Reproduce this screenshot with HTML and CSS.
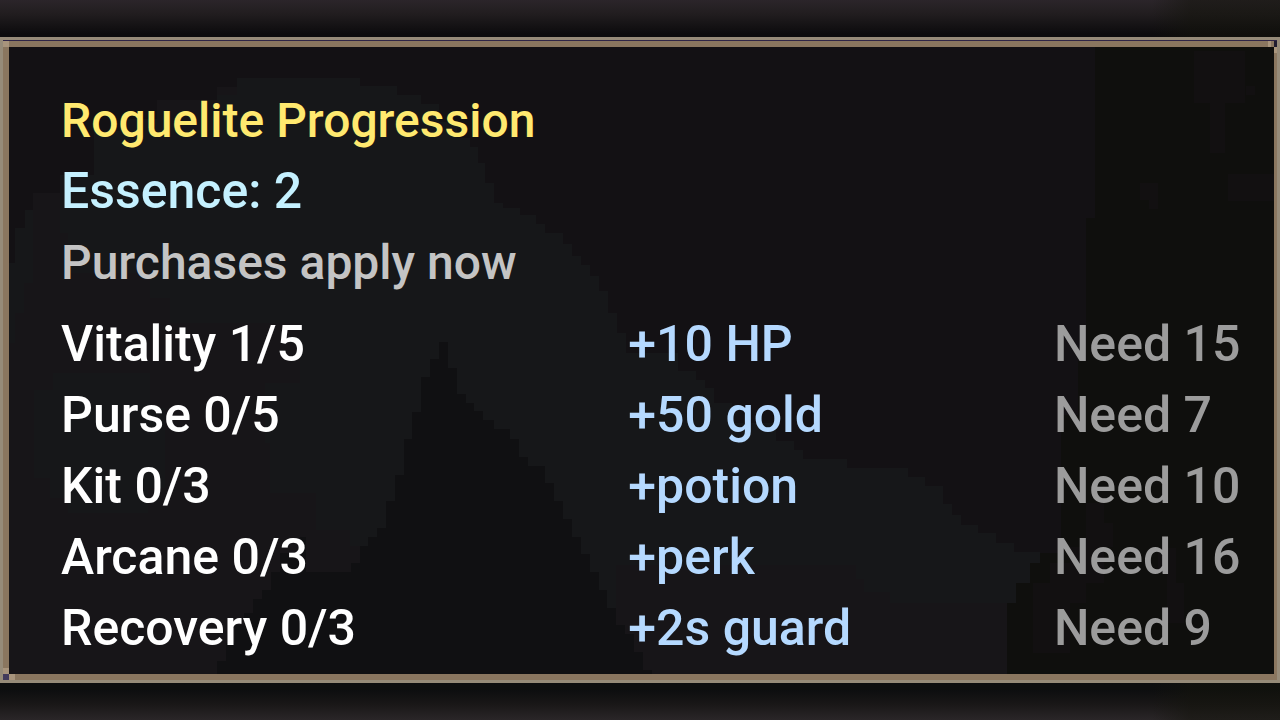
FILE: index.html
```html
<!DOCTYPE html>
<html lang="en">
<head>
<meta charset="UTF-8">
<meta name="viewport" content="width=device-width, initial-scale=1.0">
<title>Roguelite Progression</title>
<link rel="stylesheet" href="styles.css">
</head>
<body>
    <main class="panel">
        <svg class="scene" viewBox="3 -3 1274 640" preserveAspectRatio="none" aria-hidden="true">
            <!-- far hill -->
            <path class="hill" d="M0 640V220H15V185H25V167H33V159H50V150H60V132H94V88H120V76H157V57H217V44H237V35H280V35H360V43H397V52H421V61H439V79H457V95H470V104H478V120H485V140H494V160H503V165H520V172H536V181H545V190H563V201H572V213H581V222H590V233H599V248H608V270H617V290H626V310H678V328H696V337H705V345H714V360H732V380H776V398H794V407H803V416H847V425H908V434H925V443H943V461H952V472H961V482H978V490H996V500H1014V509H1040V520H1030V540H1016V560H1007V640Z"/>
            <!-- warm patches on the slope -->
            <path class="ground" d="M157 97V57H217V44H237V52H217V97ZM33 240V150H60V190H68V230H150V255H170V280H300V340H265V400H270V450H316V487H350V503H368V520H351V640H0V300H15V270H24V240Z"/>
            <path class="hill" d="M34 347H53V330H150V365H165V445H148V470H68V455H50V435H34Z"/>
            <path class="ground" d="M616 640V522H856V536H864V549H890V560H1007V640Z"/>
            <!-- near peak -->
            <path class="peak" d="M217 640V618H226V600H235V582H244V570H253V556H262V547H271V529H280V510H300V494H306V529H351V520H360V503H368V494H377V485H386V458H395V432H404V396H412V369H421V334H430V316H439V299H448V325H457V351H466V360H474V368H483V377H494V386H510V396H519V414H528V423H545V440H554V458H563V476H572V494H581V511H590V529H599V547H607V565H616V582H625V591H634V609H643V627H652V640Z"/>
            <!-- tree trunk -->
            <path class="tree" d="M1095 -3V175H1086V318H1078V372H1061V510H1040V520H1030V540H1016V560H1007V640H1280V-3Z"/>
            <path class="bark" d="M1194 8H1245V60H1225V110H1210V60H1194ZM1203 25H1211V34H1203ZM1246 43H1255V52H1246ZM1140 140H1158V166H1149V157H1140ZM1228 131H1274V158H1228ZM1086 460H1104V480H1113V504H1104V540H1086V560H1070V610H1033V540H1050V520H1070V504H1086ZM1158 505H1176V540H1184V580H1167V530H1158Z"/>
        </svg>

        <div class="frame">
            <span class="corner top-left"></span>
            <span class="corner top-right"></span>
            <span class="corner bottom-left"></span>
        </div>

        <div class="content">
            <h1 class="title">Roguelite Progression</h1>
            <p class="essence">Essence: 2</p>
            <p class="note">Purchases apply now</p>

            <table class="upgrades">
                <tr>
                    <td class="name">Vitality 1/5</td>
                    <td class="bonus">+10 HP</td>
                    <td class="cost">Need 15</td>
                </tr>
                <tr>
                    <td class="name">Purse 0/5</td>
                    <td class="bonus">+50 gold</td>
                    <td class="cost">Need 7</td>
                </tr>
                <tr>
                    <td class="name">Kit 0/3</td>
                    <td class="bonus">+potion</td>
                    <td class="cost">Need 10</td>
                </tr>
                <tr>
                    <td class="name">Arcane 0/3</td>
                    <td class="bonus">+perk</td>
                    <td class="cost">Need 16</td>
                </tr>
                <tr>
                    <td class="name">Recovery 0/3</td>
                    <td class="bonus">+2s guard</td>
                    <td class="cost">Need 9</td>
                </tr>
            </table>
        </div>
    </main>
</body>
</html>
```

FILE: styles.css
```css
* {
    box-sizing: border-box;
}

body {
    margin: 0;
    padding: 37px 0;
    min-height: 100vh;
    display: flex;
    background:
        linear-gradient(90deg, transparent 90%, rgba(20, 20, 12, 0.5) 93%),
        linear-gradient(#2b252a 0, #211d1f 14px, #0c0b0d 34px, #0d0e0f calc(100% - 30px), #191717 calc(100% - 16px), #2a2628 100%);
    color: #ffffff;
    font-family: Roboto, sans-serif;
    font-size: 50px;
    font-weight: 500;
    line-height: 71px;
}

.panel {
    position: relative;
    flex: 1;
    border: 3px solid #968b79;
    background-color: #131114;
}

.scene {
    position: absolute;
    width: 100%;
    height: 100%;
    shape-rendering: crispEdges;
}

.hill {
    fill: #161719;
}

.ground {
    fill: #171518;
}

.peak {
    fill: #101012;
}

.tree {
    fill: #0f0f0d;
}

.bark {
    fill: #121011;
}

/* inner brown frame with a thin dark line above it */
.frame {
    position: absolute;
    inset: 1px 0 0;
    border: 6px solid #8a765f;
    border-right-width: 3px;
    box-shadow: 0 -1px 0 #2f2546;
}

.corner {
    position: absolute;
    width: 6px;
    height: 6px;
    background-color: #a8947c;
}

.top-left {
    top: -6px;
    left: -6px;
}

.top-right {
    top: -6px;
    right: -3px;
    width: 3px;
    background-color: #211d30;
    box-shadow: -6px 0 0 #a8947c, 0 6px 0 #a8947c;
}

.bottom-left {
    bottom: -6px;
    left: -6px;
    background-color: #433b5c;
    box-shadow: 6px 0 0 #a8947c, 0 -6px 0 #a8947c;
}

.content {
    position: relative;
    padding: 45px 34px 0 58px;
}

.title,
.essence,
.note {
    margin: 0;
    font-size: 50px;
    font-weight: 500;
}

.title {
    color: #ffe96f;
    font-size: 48px;
}

.essence {
    color: #c5f1ff;
}

.note {
    margin-bottom: 11px;
    color: #c4c4c4;
    font-size: 48px;
}

.upgrades {
    width: 100%;
    border-collapse: collapse;
    table-layout: fixed;
}

.upgrades td {
    padding: 0;
    white-space: nowrap;
}

.name {
    width: 48%;
}

.bonus {
    width: 36%;
    color: #b5d9ff;
}

.cost {
    color: #9c9c9c;
}
```
